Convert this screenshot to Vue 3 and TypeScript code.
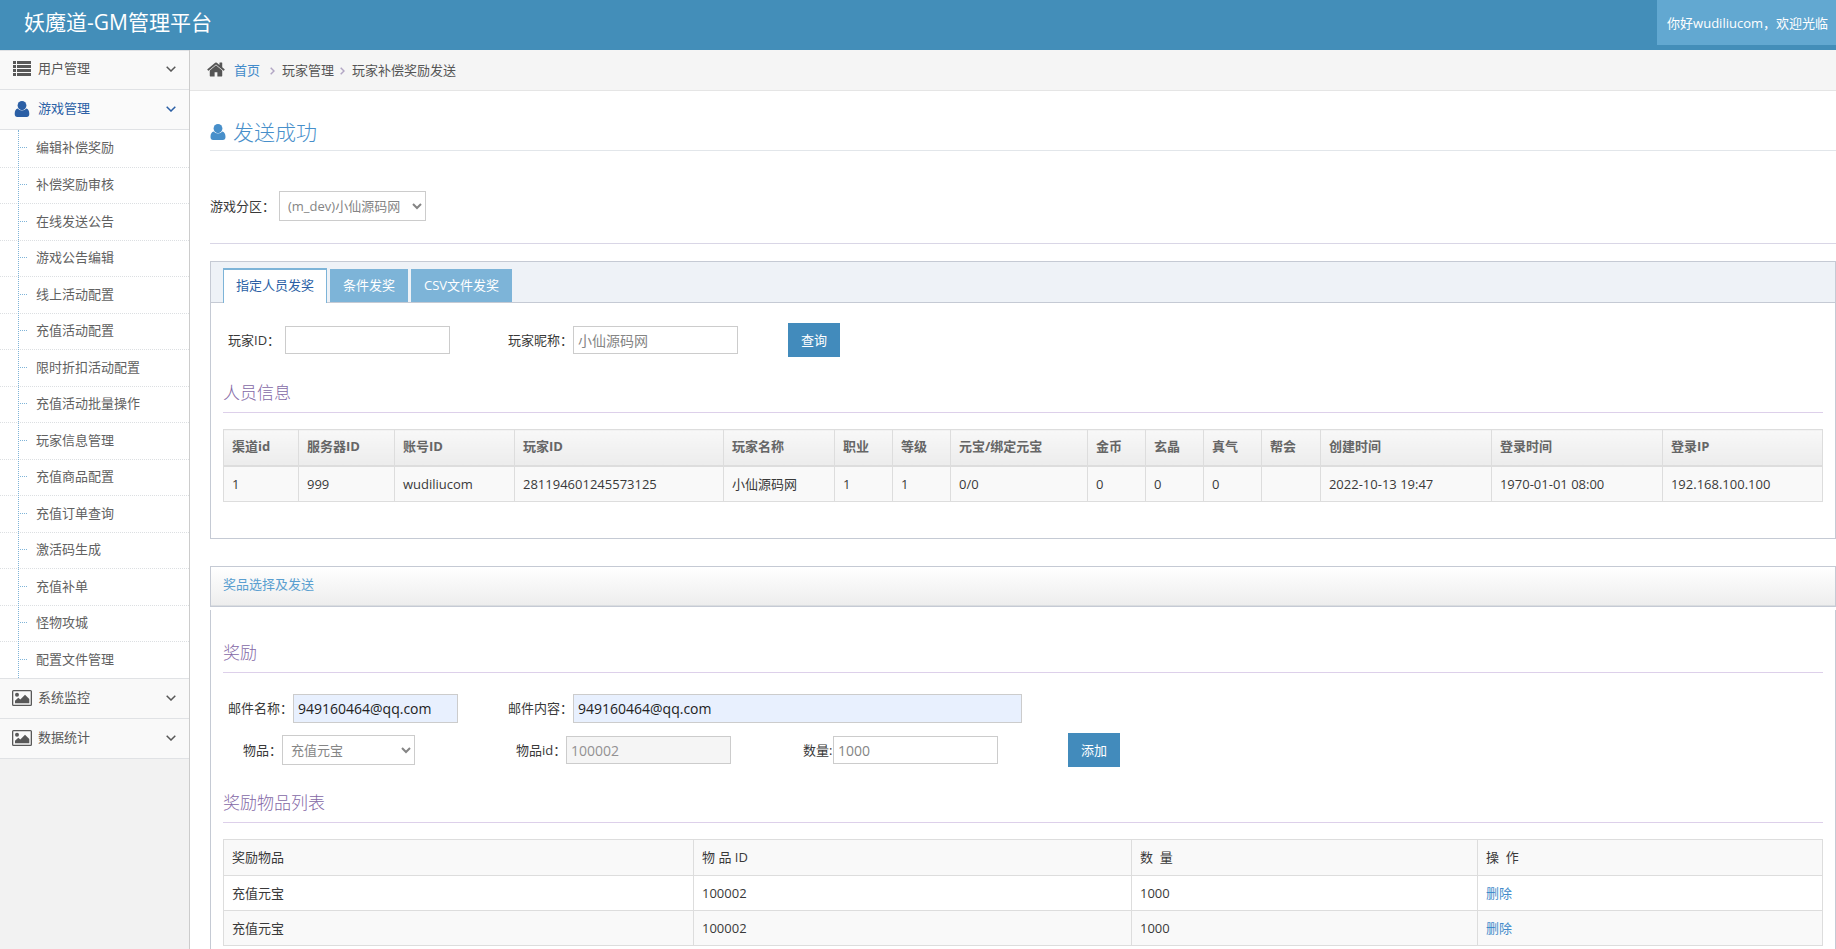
<script setup lang="ts">
import { ref } from 'vue'

interface Column {
  label: string
  span: number
}

const submenu: string[] = [
  '编辑补偿奖励',
  '补偿奖励审核',
  '在线发送公告',
  '游戏公告编辑',
  '线上活动配置',
  '充值活动配置',
  '限时折扣活动配置',
  '充值活动批量操作',
  '玩家信息管理',
  '充值商品配置',
  '充值订单查询',
  '激活码生成',
  '充值补单',
  '怪物攻城',
  '配置文件管理',
]

const tabs: string[] = ['指定人员发奖', '条件发奖', 'CSV文件发奖']
const activeTab = ref(0)

const playerColumns: Column[] = [
  { label: '渠道id', span: 75 },
  { label: '服务器ID', span: 96 },
  { label: '账号ID', span: 120 },
  { label: '玩家ID', span: 209 },
  { label: '玩家名称', span: 111 },
  { label: '职业', span: 58 },
  { label: '等级', span: 58 },
  { label: '元宝/绑定元宝', span: 137 },
  { label: '金币', span: 58 },
  { label: '玄晶', span: 58 },
  { label: '真气', span: 58 },
  { label: '帮会', span: 59 },
  { label: '创建时间', span: 171 },
  { label: '登录时间', span: 171 },
  { label: '登录IP', span: 160 },
]

const players: string[][] = [
  [
    '1', '999', 'wudiliucom', '281194601245573125', '小仙源码网', '1', '1', '0/0',
    '0', '0', '0', '', '2022-10-13 19:47', '1970-01-01 08:00', '192.168.100.100',
  ],
]

const rewardColumns: Column[] = [
  { label: '奖励物品', span: 470 },
  { label: '物 品 ID', span: 438 },
  { label: '数\u00a0\u00a0量', span: 346 },
  { label: '操\u00a0\u00a0作', span: 345 },
]

const rewards = ref([
  { name: '充值元宝', id: '100002', count: '1000' },
  { name: '充值元宝', id: '100002', count: '1000' },
])

const playerId = ref('')
const nickname = ref('小仙源码网')
const mailTitle = ref('949160464@qq.com')
const mailBody = ref('949160464@qq.com')
const itemId = ref('100002')
const itemCount = ref('1000')

function share(columns: Column[], column: Column): string {
  const total = columns.reduce((sum, c) => sum + c.span, 0)
  return (column.span / total) * 100 + '%'
}

function addReward(): void {
  rewards.value.push({ name: '充值元宝', id: itemId.value, count: itemCount.value })
}

function removeReward(index: number): void {
  rewards.value.splice(index, 1)
}
</script>

<template>
  <div class="page">
    <header class="navbar">
      <a class="brand" href="#">妖魔道-GM管理平台</a>
      <span class="welcome">你好wudiliucom，欢迎光临</span>
    </header>

    <div class="body">
      <nav class="sidebar">
        <a class="group first" href="#">
          <svg class="icon" viewBox="0 0 18 15" width="18" height="15">
            <path d="M0 0h3v3H0zM0 4h3v3H0zM0 8h3v3H0zM0 12h3v3H0zM4 0h14v3H4zM4 4h14v3H4zM4 8h14v3H4zM4 12h14v3H4z" />
          </svg>
          <span>用户管理</span>
          <svg class="arrow" viewBox="0 0 10 6" width="10" height="6"><path d="M0.7 0.7 5 5 9.3 0.7" /></svg>
        </a>
        <a class="group open" href="#">
          <svg class="icon" viewBox="0 0 20 16" width="20" height="16">
            <ellipse cx="10" cy="4.600" rx="4.400" ry="4.600" />
            <path d="M5.800 7.600C3.700 8 2.700 9.900 2.700 13c0 2 1 3 2.600 3h9.400c1.600 0 2.600-1 2.600-3 0-3.100-1-5-3.100-5.400-1 1.300-2.500 2-4.200 2s-3.200-.7-4.200-2z" />
          </svg>
          <span>游戏管理</span>
          <svg class="arrow" viewBox="0 0 10 6" width="10" height="6"><path d="M0.7 0.7 5 5 9.3 0.7" /></svg>
        </a>
        <ul class="submenu">
          <li v-for="item in submenu" :key="item"><a href="#">{{ item }}</a></li>
        </ul>
        <a v-for="item in ['系统监控', '数据统计']" :key="item" class="group" href="#">
          <svg class="icon" viewBox="0 0 20 16" width="20" height="16">
            <path fill-rule="evenodd" d="M1.500 0h17A1.500 1.500 0 0 1 20 1.500v13a1.500 1.500 0 0 1-1.500 1.500h-17A1.500 1.500 0 0 1 0 14.500v-13A1.500 1.500 0 0 1 1.500 0zM1.300 1.300v13.400h17.400V1.300z" />
            <circle cx="5" cy="4.700" r="2" />
            <path d="M3 13.300v-2.600l3.300-3 2 1.700L13 4.700l4.300 4.300v4.300z" />
          </svg>
          <span>{{ item }}</span>
          <svg class="arrow" viewBox="0 0 10 6" width="10" height="6"><path d="M0.7 0.7 5 5 9.3 0.7" /></svg>
        </a>
      </nav>

      <main class="main">
        <nav class="breadcrumb" aria-label="breadcrumb">
          <svg class="home" viewBox="0 256 1664 1280" width="18" height="15">
            <path d="M1408 992v480q0 26-19 45t-45 19h-384v-384h-256v384h-384q-26 0-45-19t-19-45v-480q0-1 .5-3t.5-3l575-474 575 474q1 2 1 6zm223-69l-62 74q-8 9-21 11h-3q-13 0-21-7l-692-577-692 577q-12 8-24 7-13-2-21-11l-62-74q-8-10-7-23.5t11-21.5l719-599q32-26 76-26t76 26l244 204v-195q0-14 9-23t23-9h192q14 0 23 9t9 23v408l219 182q10 8 11 21.5t-7 23.5z" />
          </svg>
          <a href="#">首页</a>
          <svg class="sep" viewBox="0 0 5 8" width="5" height="8"><path d="M0.7 0.7 4 4 0.7 7.3" /></svg>
          <span>玩家管理</span>
          <svg class="sep" viewBox="0 0 5 8" width="5" height="8"><path d="M0.7 0.7 4 4 0.7 7.3" /></svg>
          <span>玩家补偿奖励发送</span>
        </nav>

        <div class="content">
          <h1 class="title">
            <svg viewBox="2 0 16 16" width="16" height="16">
              <ellipse cx="10" cy="4.600" rx="4.400" ry="4.600" />
              <path d="M5.800 7.600C3.700 8 2.500 9.900 2.500 13c0 2 1 3 2.600 3h9.800c1.600 0 2.600-1 2.600-3 0-3.100-1.200-5-3.300-5.400-1 1.300-2.500 2-4.200 2s-3.200-.7-4.200-2z" />
            </svg>
            发送成功
          </h1>

          <div class="zone">
            <label for="zone">游戏分区：</label>
            <select id="zone"><option>(m_dev)小仙源码网</option></select>
          </div>

          <section class="tabbox">
            <div class="tabs" role="tablist">
              <button
                v-for="(tab, i) in tabs"
                :key="tab"
                type="button"
                role="tab"
                class="tab"
                :class="{ active: i === activeTab }"
                :aria-selected="i === activeTab"
                @click="activeTab = i"
              >{{ tab }}</button>
            </div>
            <div class="pane">
              <form class="row" @submit.prevent>
                <div class="field col-first">
                  <label for="pid" class="wide">玩家ID：</label>
                  <input id="pid" v-model="playerId" type="text" />
                </div>
                <div class="field col-second">
                  <label for="nick">玩家昵称：</label>
                  <input id="nick" v-model="nickname" type="text" />
                </div>
                <button type="submit" class="btn query">查询</button>
              </form>
              <h4 class="heading">人员信息</h4>
              <table class="grid players">
                <colgroup>
                  <col v-for="c in playerColumns" :key="c.label" :style="{ width: share(playerColumns, c) }" />
                </colgroup>
                <thead>
                  <tr><th v-for="c in playerColumns" :key="c.label" scope="col">{{ c.label }}</th></tr>
                </thead>
                <tbody>
                  <tr v-for="(row, r) in players" :key="r">
                    <td v-for="(cell, i) in row" :key="i">{{ cell }}</td>
                  </tr>
                </tbody>
              </table>
            </div>
          </section>

          <section class="widget">
            <h5 class="widget-head">奖品选择及发送</h5>
            <div class="widget-body">
              <h4 class="heading">奖励</h4>
              <form @submit.prevent="addReward">
                <div class="row mail">
                  <div class="field col-first">
                    <label for="mail-title">邮件名称：</label>
                    <input id="mail-title" v-model="mailTitle" type="text" class="filled" />
                  </div>
                  <div class="field">
                    <label for="mail-body">邮件内容：</label>
                    <input id="mail-body" v-model="mailBody" type="text" class="filled long" />
                  </div>
                </div>
                <div class="row item">
                  <div class="field item-name">
                    <label for="item">物品：</label>
                    <select id="item"><option>充值元宝</option></select>
                  </div>
                  <div class="field item-id">
                    <label for="item-id">物品id：</label>
                    <input id="item-id" v-model="itemId" type="text" readonly />
                  </div>
                  <div class="field item-count">
                    <label for="count">数量:</label>
                    <input id="count" v-model="itemCount" type="text" />
                  </div>
                  <button type="submit" class="btn">添加</button>
                </div>
              </form>
              <h4 class="heading">奖励物品列表</h4>
              <table class="grid rewards">
                <colgroup>
                  <col v-for="c in rewardColumns" :key="c.label" :style="{ width: share(rewardColumns, c) }" />
                </colgroup>
                <thead>
                  <tr><th v-for="c in rewardColumns" :key="c.label" scope="col">{{ c.label }}</th></tr>
                </thead>
                <tbody>
                  <tr v-for="(item, i) in rewards" :key="i">
                    <td>{{ item.name }}</td>
                    <td>{{ item.id }}</td>
                    <td>{{ item.count }}</td>
                    <td><a href="#" @click.prevent="removeReward(i)">删除</a></td>
                  </tr>
                </tbody>
              </table>
            </div>
          </section>
        </div>
      </main>
    </div>
  </div>
</template>

<style>
body {
  margin: 0;
  background: #fff;
}
</style>

<style scoped>
* {
  box-sizing: border-box;
}

.page {
  display: flex;
  flex-direction: column;
  min-height: 100vh;
  font-family: 'Open Sans', 'Noto Sans CJK SC', sans-serif;
  font-size: 13px;
  line-height: 20px;
  color: #393939;
}

a {
  color: #428bca;
  text-decoration: none;
}

.navbar {
  display: flex;
  justify-content: space-between;
  height: 50px;
  background: #438eb9;
}

.brand {
  padding-left: 24px;
  font-size: 21px;
  line-height: 44px;
  color: #fff;
}

.welcome {
  height: 45px;
  padding: 0 8px 0 10px;
  line-height: 46px;
  color: #fff;
  background: #62a8d1;
}

.body {
  display: flex;
  flex: 1;
}

.sidebar {
  flex: none;
  width: 190px;
  border-right: 1px solid #ccc;
  background: #f2f2f2;
}

.group {
  display: flex;
  align-items: center;
  height: 40px;
  padding: 0 13px 2px 12px;
  border-bottom: 1px solid #e0e2e5;
  background: #f9f9f9;
  color: #585858;
}

.group.first {
  box-shadow: inset 0 1px #e0e2e5;
}

.group.open {
  background: #fafafa;
  color: #2b5fa5;
}

.group .icon {
  flex: none;
  width: 20px;
  margin-right: 6px;
  fill: currentColor;
}

.group span {
  flex: 1;
  padding-bottom: 1px;
}

.arrow,
.sep {
  fill: none;
  stroke: currentColor;
  stroke-width: 1.5;
}

.submenu {
  position: relative;
  margin: 0;
  padding: 0;
  list-style: none;
  background: #fff;
  border-bottom: 1px solid #e0e2e5;
}

.submenu::before {
  content: '';
  position: absolute;
  top: 0;
  bottom: 0;
  left: 18px;
  border-left: 1px dotted #7fb4d8;
}

.submenu li {
  display: flex;
  align-items: center;
  height: 37px;
  padding-bottom: 2px;
}

.submenu li:nth-child(even) {
  height: 36px;
}

.submenu li + li {
  border-top: 1px dotted #dcdfe2;
}

.submenu li::before {
  content: '';
  width: 7px;
  margin-left: 20px;
  border-top: 1px dotted #7fb4d8;
}

.submenu a {
  margin-left: 9px;
  padding-bottom: 1px;
  color: #616161;
}

.main {
  display: flex;
  flex: 1;
  flex-direction: column;
  min-width: 0;
}

.breadcrumb {
  display: flex;
  align-items: center;
  height: 41px;
  padding: 0 0 1px 17px;
  border-bottom: 1px solid #e5e5e5;
  background: #f5f5f5;
  color: #555;
}

.home {
  margin-right: 9px;
  fill: #555;
}

.sep {
  margin: 2px 7px 0 6px;
  color: #b2a6c4;
}

.breadcrumb a + .sep {
  margin-left: 10px;
}

.content {
  display: flex;
  flex: 1;
  flex-direction: column;
  padding: 20px 0 0 20px;
}

.title {
  display: flex;
  align-items: center;
  gap: 7px;
  height: 40px;
  margin: 0;
  padding-top: 2px;
  border-bottom: 1px solid #e2e6ea;
  font-size: 21px;
  font-weight: 300;
  color: #478fca;
}

.title svg {
  fill: #478fca;
}

.zone {
  display: flex;
  align-items: center;
  height: 93px;
  padding-top: 18px;
  border-bottom: 1px solid #d9d6e6;
}

.zone select {
  width: 147px;
}

.zone label {
  width: 69px;
}

select {
  height: 30px;
  padding: 3px 4px;
  border: 1px solid #ccc;
  border-radius: 0;
  background: #fff;
  color: #858585;
  font: inherit;
}

input {
  width: 165px;
  height: 28px;
  padding: 4px;
  border: 1px solid #ccc;
  border-radius: 0;
  background: #fff;
  color: #858585;
  font: inherit;
  font-size: 14px;
}

input[readonly] {
  background: #f5f5f5;
  color: #939192;
}

input.filled {
  height: 29px;
  background: #e8f0fe;
  color: #222;
}

input.long {
  width: 449px;
}

.btn {
  width: 52px;
  height: 34px;
  padding: 0 0 1px;
  border: 0;
  background: #428bbc;
  color: #fff;
  font: inherit;
}

.tabbox {
  margin-top: 17px;
  border: 1px solid #c5cad4;
}

.tabs {
  display: flex;
  align-items: flex-end;
  gap: 3px;
  height: 41px;
  padding-left: 12px;
  border-bottom: 1px solid #c5cad4;
  background: #eef2f7;
}

.tab {
  height: 33px;
  padding: 0 13px 1px;
  border: 0;
  background: #7db4d8;
  color: #fff;
  font: inherit;
}

.tab.active {
  height: 35px;
  margin-bottom: -1px;
  padding: 0 12px 3px;
  border: 1px solid #7db4d8;
  border-top-width: 2px;
  border-bottom: 0;
  background: #fff;
  color: #2b5fa5;
}

.pane {
  padding: 20px 12px 36px;
}

.row {
  display: flex;
  align-items: center;
  height: 34px;
  padding-left: 5px;
}

.field {
  display: flex;
  align-items: center;
}

.col-first {
  width: 280px;
}

.col-second {
  width: 280px;
}

.field label {
  width: 65px;
  padding-bottom: 1px;
  white-space: nowrap;
}

.field .wide {
  width: 57px;
}

.heading {
  height: 32px;
  margin: 24px 0 16px;
  border-bottom: 1px solid #ddd0ea;
  font-size: 17px;
  font-weight: 300;
  line-height: 24px;
  color: #8468a6;
}

.grid {
  width: 100%;
  border-collapse: collapse;
  table-layout: fixed;
}

.grid th,
.grid td {
  height: 35px;
  padding: 0 8px;
  border: 1px solid #ddd;
  text-align: left;
  white-space: nowrap;
}

.grid th {
  height: 36px;
  padding-bottom: 2px;
}

.players th {
  border-bottom-width: 2px;
  background: linear-gradient(#f8f8f8, #ececec);
  color: #666;
}

.players td {
  height: 36px;
}

.players td,
.rewards th,
.rewards tr:nth-child(even) td {
  background: #f9f9f9;
}

.rewards th {
  font-weight: 400;
}

.widget {
  display: flex;
  flex: 1;
  flex-direction: column;
  margin-top: 27px;
}

.widget-head {
  height: 41px;
  margin: 0 0 3px;
  padding-left: 12px;
  border: 1px solid #c5cad4;
  background: linear-gradient(#fff, #ededed);
  box-shadow: inset 0 -1px #dadde0;
  font-size: 13px;
  font-weight: 400;
  line-height: 34px;
  color: #5a9fd0;
}

.widget-body {
  flex: 1;
  padding: 31px 12px 0;
  border: 1px solid #c5cad4;
  border-width: 0 1px;
}

.widget-body > .heading:first-child {
  margin-top: 0;
}

.mail {
  margin-top: 18px;
}

.item {
  margin-top: 8px;
  padding-left: 20px;
}

.item-name {
  width: 273px;
}

.item-name label {
  width: 39px;
}

.item-name select {
  width: 133px;
}

.item-id {
  width: 287px;
}

.item-id label {
  width: 50px;
}

.item-count {
  width: 265px;
}

.item-count label {
  width: 30px;
}
</style>
